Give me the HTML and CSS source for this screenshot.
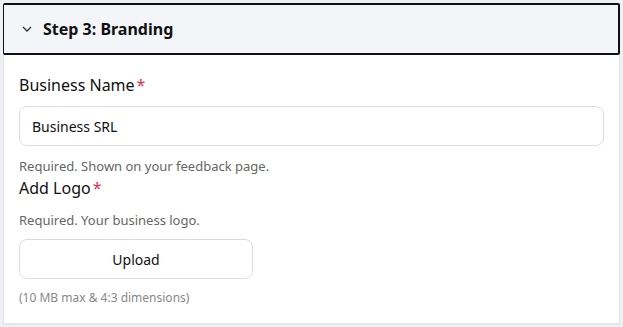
FILE: index.html
```html
<!DOCTYPE html>
<html lang="en">
<head>
  <meta charset="UTF-8">
  <meta name="viewport" content="width=device-width, initial-scale=1.0">
  <title>Branding</title>
  <link rel="stylesheet" href="styles.css">
</head>
<body>
  <div class="step">
    <div class="step-header">
      <svg class="chevron" width="10" height="6" viewBox="0 0 10 6"><path d="M1 1l4 4 4-4" fill="none" stroke="#333" stroke-width="1.3"/></svg>
      <span class="step-title">Step 3: Branding</span>
    </div>

    <div class="step-body">
      <label class="field-label">Business Name<span class="req">*</span></label>
      <input class="text-input" type="text" value="Business SRL">
      <p class="hint">Required. Shown on your feedback page.</p>

      <label class="field-label logo-label">Add Logo<span class="req">*</span></label>
      <p class="hint logo-hint">Required. Your business logo.</p>
      <button class="upload-button">Upload</button>
      <p class="small-hint">(10 MB max &amp; 4:3 dimensions)</p>
    </div>
  </div>
</body>
</html>
```

FILE: styles.css
```css
body {
  margin: 0;
  padding: 3px 3px 0 3px;
  background-color: #eef0f4;
  font-family: 'Noto Sans', 'Open Sans', sans-serif;
  color: #111;
}

.step {
  width: 617px;
}

/* Header bar */
.step-header {
  display: flex;
  align-items: center;
  height: 48px;
  padding: 0 16px 0 18px;
  background-color: #f4f5f9;
  border: 2px solid #111;
  border-left-width: 1px;
  border-radius: 2px;
}

.chevron {
  margin-right: 11px;
}

.step-title {
  font-size: 16px;
  font-weight: bold;
}

/* Body */
.step-body {
  background-color: #fff;
  border-left: 1px solid #e2e4ea;
  border-right: 1px solid #e2e4ea;
  border-bottom: 2px solid #e4e6ec;
  padding: 18px 15px 17px 15px;
}

.field-label {
  display: block;
  font-size: 16px;
  line-height: 24px;
}

.logo-label {
  margin-top: 1px;
}

.req {
  color: #e0324e;
  margin-left: 2px;
}

.text-input {
  display: block;
  box-sizing: border-box;
  width: 585px;
  height: 40px;
  margin-top: 9px;
  padding: 0 12px;
  border: 1px solid #dcdcdc;
  border-radius: 8px;
  font-family: inherit;
  font-size: 14px;
  color: #111;
}

.hint {
  margin: 11px 0 0 0;
  font-size: 13px;
  line-height: 18px;
  color: #666;
}

.logo-hint {
  margin-top: 11px;
}

.upload-button {
  display: block;
  box-sizing: border-box;
  width: 234px;
  height: 40px;
  margin-top: 10px;
  background-color: #fff;
  border: 1px solid #dcdcdc;
  border-radius: 8px;
  font-family: inherit;
  font-size: 14px;
  color: #111;
}

.small-hint {
  margin: 11px 0 0 0;
  font-size: 12px;
  line-height: 16px;
  color: #888;
}
```
